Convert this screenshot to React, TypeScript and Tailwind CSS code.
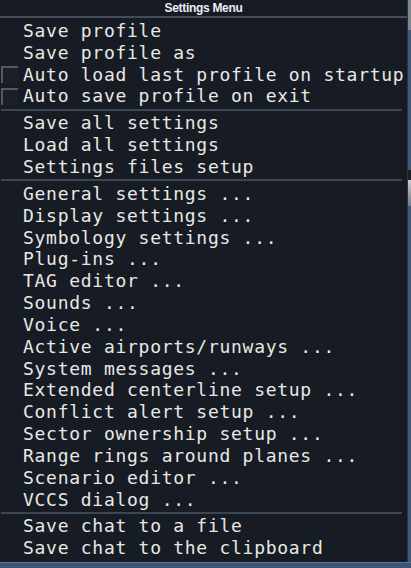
import React from 'react';

type Item = { label: string; check?: boolean };

const groups: Item[][] = [
    [
        { label: 'Save profile' },
        { label: 'Save profile as' },
        { label: 'Auto load last profile on startup', check: true },
        { label: 'Auto save profile on exit', check: true },
    ],
    [{ label: 'Save all settings' }, { label: 'Load all settings' }, { label: 'Settings files setup' }],
    [
        { label: 'General settings ...' },
        { label: 'Display settings ...' },
        { label: 'Symbology settings ...' },
        { label: 'Plug-ins ...' },
        { label: 'TAG editor ...' },
        { label: 'Sounds ...' },
        { label: 'Voice ...' },
        { label: 'Active airports/runways ...' },
        { label: 'System messages ...' },
        { label: 'Extended centerline setup ...' },
        { label: 'Conflict alert setup ...' },
        { label: 'Sector ownership setup ...' },
        { label: 'Range rings around planes ...' },
        { label: 'Scenario editor ...' },
        { label: 'VCCS dialog ...' },
    ],
    [{ label: 'Save chat to a file' }, { label: 'Save chat to the clipboard' }],
];

function MenuRow({ item }: { item: Item }) {
    return (
        <div className="flex h-[21.85px] items-center">
            <div className="flex w-[21px] shrink-0 justify-start pl-[1px]">
                {item.check && (
                    <div className="h-[17px] w-[17px] border-t-2 border-l-2 border-t-[#535a63] border-l-[#535a63] bg-[#1b2028]" />
                )}
            </div>
            <span className="whitespace-nowrap pl-[2px] text-[18px] leading-none tracking-[0.72px] text-[#e8e8e4]">
                {item.label}
            </span>
        </div>
    );
}

function Separator() {
    return (
        <div className="flex h-[5px] items-center pl-[1px] pr-[5px]">
            <div className="h-[2px] w-full bg-[#3a4654]" />
        </div>
    );
}

export default function App() {
    return (
        <div className="flex h-[568px] w-[411px] flex-col bg-[#3a5578]" style={{ fontFamily: '"DejaVu Sans Mono", monospace' }}>
            <div className="flex h-[562px]">
                <div className="flex w-[408px] flex-col border-r border-[#2d343d] bg-[#171c24]">
                    <div className="flex h-[18px] items-center justify-center border-b-2 border-[#434d5a]">
                        <span className="text-[12px] font-bold tracking-[-0.3px] text-[#e9ecf2]" style={{ fontFamily: '"Liberation Sans", Arial, sans-serif' }}>
                            Settings Menu
                        </span>
                    </div>
                    <div className="flex flex-col pt-[2px]">
                        {groups.map((g, gi) => (
                            <React.Fragment key={gi}>
                                {gi > 0 && <Separator />}
                                {g.map((it) => (
                                    <MenuRow key={it.label} item={it} />
                                ))}
                            </React.Fragment>
                        ))}
                    </div>
                </div>
                <div className="flex w-[3px] flex-col">
                    <div className="h-[30px] bg-[#7d858e]" />
                    <div className="h-[140px] bg-[#3d5a7e]" />
                    <div className="h-[10px] bg-[#1a1f26]" />
                    <div className="h-[26px] bg-gradient-to-b from-[#c9ccd0] to-[#6f7a88]" />
                    <div className="flex-1 bg-[#3d5a7e]" />
                </div>
            </div>
            <div className="h-[1px] bg-[#5c7391]" />
            <div className="flex-1 bg-[#3a5578]" />
        </div>
    );
}
